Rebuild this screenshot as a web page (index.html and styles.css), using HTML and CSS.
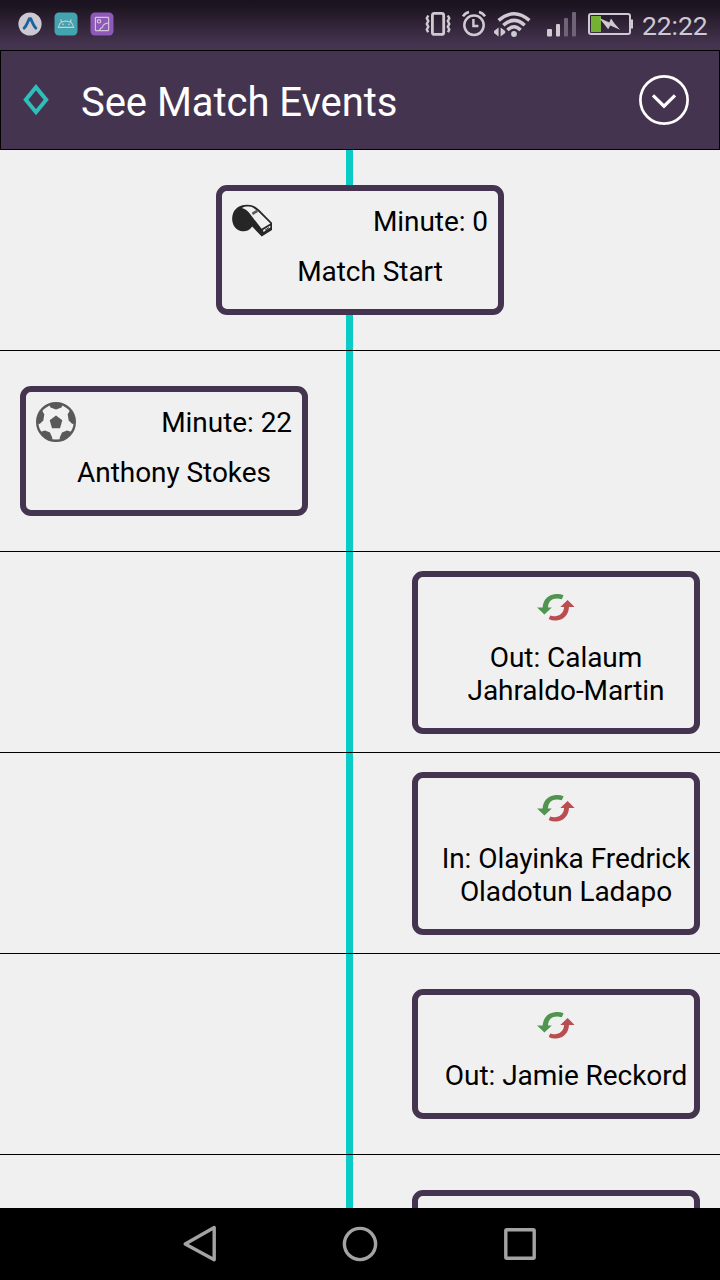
FILE: index.html
```html
<!DOCTYPE html>
<html lang="en">
<head>
<meta charset="utf-8">
<title>See Match Events</title>
<link rel="stylesheet" href="styles.css">
</head>
<body>
<svg class="defs" width="0" height="0">
  <symbol id="swap" viewBox="0 0 40 40">
    <path d="M6.6 20.5C7.4 12.5 12 7.8 20 7.1Q24 6.8 27.6 8.2L25.8 12.2Q22 11.2 18.8 11.7C14.5 12.4 12.3 15.5 12 20.5H15.8L8.4 27.6 1.1 20.5Z" fill="#4f944f"/>
    <path d="M33 20C32.6 27.5 28 32.8 20.5 33.5Q16 33.8 12.7 32L14.2 28.6Q17 29.7 20.5 29C25 28.2 27.8 25 28.1 20H24.3L31.6 13.1 38.6 20Z" fill="#b94d50"/>
  </symbol>
</svg>
<div class="screen">
  <header class="status">
    <div class="status-apps">
      <svg width="24" height="24" viewBox="0 0 24 24"><circle cx="12" cy="12" r="11.6" fill="#cdc9d0"/><path d="M6.2 16.1C8.6 13.6 10 9.5 11.2 6.8H12.8C14 9.5 15.4 13.6 17.8 16.1" fill="none" stroke="#1d629f" stroke-width="2.9" stroke-linecap="round" stroke-linejoin="round"/></svg>
      <svg width="24" height="24" viewBox="0 0 24 24"><rect x=".5" y=".5" width="23" height="23" rx="4.5" fill="#43a3af"/><path d="M4.5 15.3C4.7 7 19.3 7 19.5 15.3ZM7.5 10 6.8 7.5M16.5 10l.7-2.5" fill="none" stroke="#c6d0d3" stroke-width="1.2"/><circle cx="9" cy="12.3" r=".8" fill="#d5dadb"/><circle cx="15" cy="12.3" r=".8" fill="#d5dadb"/></svg>
      <svg width="24" height="24" viewBox="0 0 24 24"><rect x=".5" y=".5" width="23" height="23" rx="4.5" fill="#8e59b8"/><g fill="none" stroke="#cfc4d8" stroke-width="1.2"><rect x="5.4" y="5.4" width="13.2" height="13.2" rx=".6"/><circle cx="9" cy="9.3" r="1.7"/><path d="M9.4 18.5C10.2 16.3 11.6 15.5 12.4 15.4 13 12.5 15.2 11.2 18.6 11.2"/></g></svg>
    </div>
    <div class="status-system">
      <svg width="208" height="36" viewBox="424 6 208 36" fill="none" stroke="#cfcad2">
        <rect x="432.4" y="13.4" width="11.3" height="21" rx="2" stroke-width="2.8"/>
        <path d="M428.3 15.5l-1.5 2.8 1.5 2.8-1.5 2.8 1.5 2.8-1.5 2.8 1.3 2.8M447.8 15.5l1.5 2.8-1.5 2.8 1.5 2.8-1.5 2.8 1.5 2.8-1.3 2.8" stroke-width="2.4"/>
        <circle cx="474" cy="25.2" r="9.7" stroke-width="2.5"/>
        <path d="M473.4 19v7h5" stroke-width="2.4"/>
        <path d="M463 16.4Q465 13 469 12M479 12Q483 13 485 16.4" stroke-width="2.5"/>
        <path d="M498.6 20.4Q514 7.2 529.4 20.4M503.3 25.3Q514 15.5 524.7 25.3M507.4 30Q514 23.4 520.6 30" stroke-width="3.5"/>
        <circle cx="514" cy="34" r="2.9" fill="#cfcad2" stroke="none"/>
        <path d="M498.6 27.5v9L494 33V31ZM500.6 27.5v9L505.2 33V31Z" fill="#cfcad2" stroke="none"/>
        <rect x="547" y="29" width="5" height="7.5" rx="1" fill="#cfcad2" stroke="none"/>
        <rect x="556" y="24" width="4" height="12.5" rx="1" fill="#cfcad2" stroke="none"/>
        <rect x="564" y="18" width="4" height="18.5" rx="1" fill="#706378" stroke="none"/>
        <rect x="572" y="12" width="4" height="24.5" rx="1" fill="#706378" stroke="none"/>
        <rect x="589" y="14" width="41" height="20" rx="2" stroke-width="2"/>
        <path d="M630 19.5h3v9h-3" fill="#cfcad2" stroke="none"/>
        <rect x="591" y="16" width="10" height="16" fill="#74b033" stroke="none"/>
        <path d="M599.3 18 609.3 22.5 611 18.5 614.5 23.6 620 29.8 610.2 25.6 608.2 29.2Z" fill="#cfcad2" stroke="none"/>
      </svg>
      <span class="clock">22:22</span>
    </div>
  </header>

  <div class="toolbar">
    <svg class="diamond" width="28" height="32" viewBox="0 0 28 32"><path d="M14 3.2 24.2 15.7 14 28.2 3.8 15.7Z" fill="none" stroke="#2fbfbb" stroke-width="4"/></svg>
    <h1 class="title">See Match Events</h1>
    <svg class="expand" width="50" height="50" viewBox="0 0 50 50" fill="none" stroke="#fff"><circle cx="25" cy="25" r="23.6" stroke-width="2.7"/><path d="M14 20.4 25 31.2 36 20.4" stroke-width="3.2"/></svg>
  </div>

  <main class="timeline">
    <section class="row center">
      <article class="card">
        <div class="card-head">
          <svg width="40" height="40" viewBox="0 0 40 40"><path d="M1.2 12C3.5 6.5 9 3.7 15.3 3.8 22 4 24.7 6.5 27.4 9L40 21.8V29L29.7 35.5 20.2 25.5C17 30.3 12.6 30.8 8.6 29.9 1.5 28 -1.7 19.5 1.2 12Z" fill="#262626"/><path d="M10 7C13 5.1 18 5.3 20.8 6.6L25.5 9.8 38.4 22.4 29.6 27.8 19.4 14.8C17 11 14.5 8.3 10 7Z" fill="#f0f0f0"/><path d="M20.4 12.8 25.4 9.8" stroke="#5c5c5c" stroke-width="2.6"/><path d="M31.5 31 38.3 26.6V24.4L31 29Z" fill="#f0f0f0"/><path d="M33 29.2 37 26.6" stroke="#262626"/></svg>
          <span>Minute: 0</span>
        </div>
        <p class="event">Match Start</p>
      </article>
    </section>
    <section class="row home">
      <article class="card">
        <div class="card-head">
          <svg width="40" height="40" viewBox="0 0 40 40"><defs><clipPath id="ball"><circle cx="20" cy="20" r="19"/></clipPath></defs><g fill="#595959" clip-path="url(#ball)"><path d="M20 13.5 26.3 18.2 24 26.3H16L13.7 18.2Z"/><path d="M13 2H27L25.5 5.5 20 7.4 14.5 5.5Z"/><path d="M0 9 6.5 9 8.3 12.5 7.3 18.4 3.7 22 0 21Z"/><path d="M40 9 33.5 9 31.7 12.5 32.7 18.4 36.3 22 40 21Z"/><path d="M4 30 9 28.5 14 30.4 16.3 35.7 16 39H8Z"/><path d="M36 30 31 28.5 26 30.4 23.7 35.7 24 39H32Z"/></g><circle cx="20" cy="20" r="18.8" fill="none" stroke="#595959" stroke-width="2.4"/></svg>
          <span>Minute: 22</span>
        </div>
        <p class="event">Anthony Stokes</p>
      </article>
    </section>
    <section class="row away">
      <article class="card">
        <div class="card-head swap"><svg width="40" height="40"><use href="#swap"/></svg></div>
        <p class="event">Out: Calaum<br>Jahraldo-Martin</p>
      </article>
    </section>
    <section class="row away">
      <article class="card">
        <div class="card-head swap"><svg width="40" height="40"><use href="#swap"/></svg></div>
        <p class="event">In: Olayinka Fredrick<br>Oladotun Ladapo</p>
      </article>
    </section>
    <section class="row away">
      <article class="card">
        <div class="card-head swap"><svg width="40" height="40"><use href="#swap"/></svg></div>
        <p class="event">Out: Jamie Reckord</p>
      </article>
    </section>
    <section class="row away">
      <article class="card last"></article>
    </section>
  </main>

  <nav class="navbar">
    <svg width="40" height="40" viewBox="0 0 40 40"><path d="M34.2 3.6V35.8L5.2 20Z"/></svg>
    <svg width="40" height="40" viewBox="0 0 40 40"><circle cx="20" cy="20" r="15.6"/></svg>
    <svg width="40" height="40" viewBox="0 0 40 40"><rect x="5.8" y="5.8" width="28.4" height="28.4" rx="1"/></svg>
  </nav>
</div>
</body>
</html>
```
FILE: styles.css
```css
* {
  box-sizing: border-box;
}

body {
  margin: 0;
  font-family: Roboto, "Liberation Sans", sans-serif;
  color: #000;
}

svg {
  display: block;
  flex: none;
  overflow: visible;
}

.defs {
  position: absolute;
}

.screen {
  width: 720px;
  height: 1280px;
  display: flex;
  flex-direction: column;
  overflow: hidden;
  background: #f0f0f0;
}

.status {
  flex: none;
  height: 50px;
  padding: 0 12px 0 18px;
  display: flex;
  justify-content: space-between;
  align-items: flex-start;
  background: linear-gradient(#1a121e 0, #1e1522 7px, #453450 44px);
}

.status-apps {
  display: flex;
  gap: 12px;
  padding-top: 12px;
}

.status-system {
  display: flex;
  gap: 10px;
  padding-top: 6px;
}

.clock {
  width: 66px;
  font-size: 26.5px;
  line-height: 40px;
  letter-spacing: -0.1px;
  color: #cfcad2;
  white-space: nowrap;
}

.toolbar {
  flex: none;
  height: 100px;
  padding: 0 30px 0 21px;
  display: flex;
  align-items: center;
  border: 1px solid #000;
  background: #453450;
}

.title {
  flex: 1;
  margin: 6px 0 0 31px;
  font-size: 40px;
  font-weight: 400;
  line-height: 48px;
  letter-spacing: -0.05px;
  color: #fff;
}

.timeline {
  flex: 1;
  min-height: 0;
  overflow: hidden;
}

.row {
  height: 201px;
  padding: 0 20px;
  display: flex;
  align-items: center;
  border-bottom: 1px solid #000;
  background: linear-gradient(#08ccc5, #08ccc5) 346px 0 / 7px 100% no-repeat;
}

.center {
  justify-content: center;
}

.away {
  justify-content: flex-end;
}

.card {
  width: 288px;
  min-height: 130px;
  padding: 10px;
  border: 6px solid #453450;
  border-radius: 11px;
  background: #f0f0f0;
  font-size: 28px;
  line-height: 33px;
  letter-spacing: -0.06px;
}

.card-head {
  height: 40px;
  display: flex;
  justify-content: space-between;
  align-items: center;
}

.swap {
  justify-content: center;
}

.event {
  margin: 14px -10px 11px 10px;
  text-align: center;
  white-space: nowrap;
}

.navbar {
  flex: none;
  height: 72px;
  padding: 0 180px;
  display: flex;
  justify-content: space-between;
  align-items: center;
  background: #000;
}

.navbar svg {
  fill: none;
  stroke: #a3a3a3;
  stroke-width: 3.4;
  stroke-linejoin: round;
}
```
